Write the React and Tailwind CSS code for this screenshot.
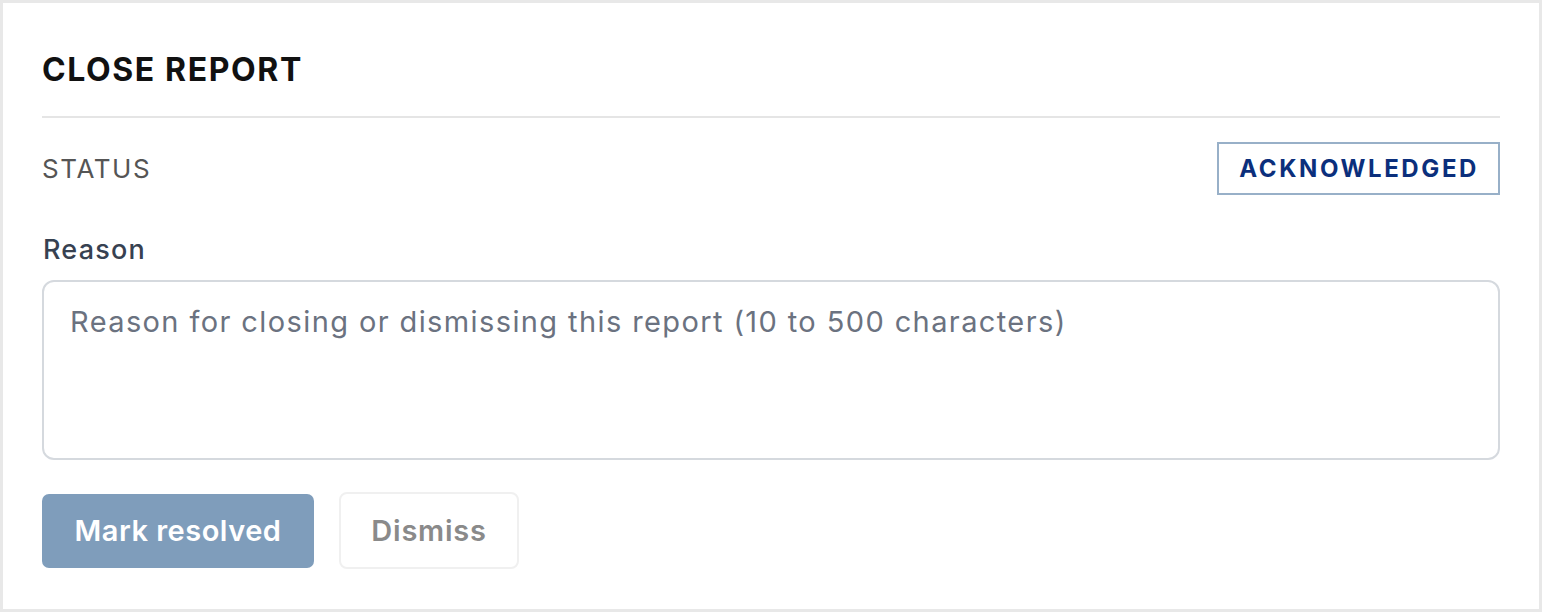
export default function App() {
  return (
    <div className="h-[612px] w-[1542px] bg-white font-['Inter',sans-serif]">
      <div className="flex h-full flex-col border-[3px] border-[#e8e8e8] px-[39px]">
        <div className="mt-[47px] border-b-2 border-[#e5e5e5] pb-[26px]">
          <h2 className="text-[32px] font-bold leading-[40px] tracking-[0.05em] text-[#111111]">
            CLOSE REPORT
          </h2>
        </div>

        <div className="mt-[24px] flex items-center justify-between">
          <span className="text-[26px] leading-[32px] tracking-[0.06em] text-[#555555]">
            STATUS
          </span>
          <span className="border-2 border-[#98b0c8] py-[9px] pl-[20px] pr-[19px] text-[24px] font-bold leading-[31px] tracking-[2.6px] text-[#0b2f7c]">
            ACKNOWLEDGED
          </span>
        </div>

        <label className="mt-[37px] block pl-[1px] text-[27px] font-medium leading-[36px] tracking-[0.045em] text-[#374151]">
          Reason
        </label>
        <textarea
          className="mt-[12px] h-[180px] w-full resize-none rounded-[12px] border-2 border-[#d5d9de] py-[22px] pl-[26px] pr-[24px] text-[29px] leading-[36px] tracking-[0.048em] text-[#111] outline-none placeholder:text-[#6b7280]"
          placeholder="Reason for closing or dismissing this report (10 to 500 characters)"
        />

        <div className="mt-[32px] flex items-center gap-[25px]">
          <button className="h-[74px] w-[272px] rounded-[7px] bg-[#7f9dbb] text-[29px] font-semibold tracking-[0.5px] text-white">
            Mark resolved
          </button>
          <button className="h-[77px] w-[180px] rounded-[8px] border-2 border-[#f0f0f0] bg-white text-[29px] font-semibold tracking-[0.75px] text-[#8a8a8a]">
            Dismiss
          </button>
        </div>
      </div>
    </div>
  );
}
